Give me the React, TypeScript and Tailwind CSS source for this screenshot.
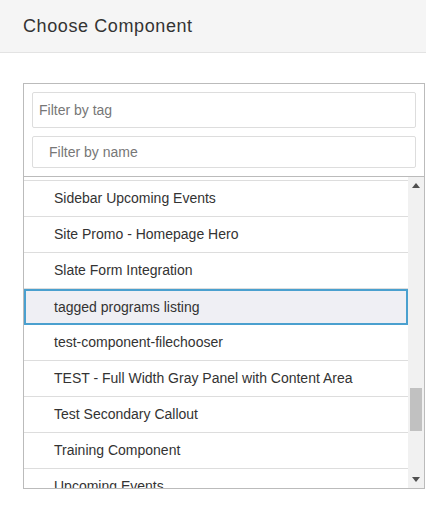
import { useState } from "react";

const ITEMS = [
  "Sidebar Promo",
  "Sidebar Upcoming Events",
  "Site Promo - Homepage Hero",
  "Slate Form Integration",
  "tagged programs listing",
  "test-component-filechooser",
  "TEST - Full Width Gray Panel with Content Area",
  "Test Secondary Callout",
  "Training Component",
  "Upcoming Events",
];

const App = () => {
  const [tag, setTag] = useState("");
  const [name, setName] = useState("");
  const [selected, setSelected] = useState("tagged programs listing");

  return (
    <div className="w-[426px] h-[510px] bg-white text-[#333] font-['Liberation_Sans',Arial,sans-serif]">
      <div className="h-[53px] bg-[#f5f5f5] border-b border-[#e3e3e3] flex items-center pl-[23px]">
        <h1 className="text-[18px] tracking-[0.6px] text-[#333] leading-none">Choose Component</h1>
      </div>
      <div className="mt-[30px] ml-[23px] w-[402px] h-[406px] border border-[#bbb] flex flex-col">
        <div className="px-2 pt-2 pb-2 flex flex-col gap-2 border-b border-[#bbb]">
          <input
            value={tag}
            onChange={(e) => setTag(e.target.value)}
            placeholder="Filter by tag"
            className="h-[36px] w-full border border-[#ddd] rounded-[2px] px-[6px] text-[14px] outline-none placeholder:text-[#777]"
          />
          <input
            value={name}
            onChange={(e) => setName(e.target.value)}
            placeholder="Filter by name"
            className="h-[32px] w-full border border-[#ddd] rounded-[2px] px-[16px] text-[14px] leading-[30px] outline-none placeholder:text-[#777]"
          />
        </div>
        <div className="flex flex-1 min-h-0">
          <div className="flex-1 overflow-hidden">
            <ul className="-mt-[32px]">
              {ITEMS.map((item) =>
                item === selected ? (
                  <li
                    key={item}
                    onClick={() => setSelected(item)}
                    className="h-[36px] flex items-center pl-[28px] border-2 border-[#4aa0cf] bg-[#efeff4] text-[14px] cursor-pointer"
                  >
                    {item}
                  </li>
                ) : (
                  <li
                    key={item}
                    onClick={() => setSelected(item)}
                    className="h-[36px] flex items-center pl-[30px] border-b border-[#ddd] text-[14px] cursor-pointer"
                  >
                    {item}
                  </li>
                )
              )}
            </ul>
          </div>
          <div className="w-[16px] bg-[#f1f1f1] flex flex-col">
            <div className="h-[17px] flex items-center justify-center">
              <svg width="8" height="5" viewBox="0 0 8 5">
                <path d="M0 5 L4 0 L8 5 Z" fill="#505050" />
              </svg>
            </div>
            <div className="flex-1 px-[2px]">
              <div className="mt-[194px] h-[43px] bg-[#c1c1c1]" />
            </div>
            <div className="h-[17px] flex items-center justify-center">
              <svg width="8" height="5" viewBox="0 0 8 5">
                <path d="M0 0 L4 5 L8 0 Z" fill="#505050" />
              </svg>
            </div>
          </div>
        </div>
      </div>
    </div>
  );
};

export default App;
